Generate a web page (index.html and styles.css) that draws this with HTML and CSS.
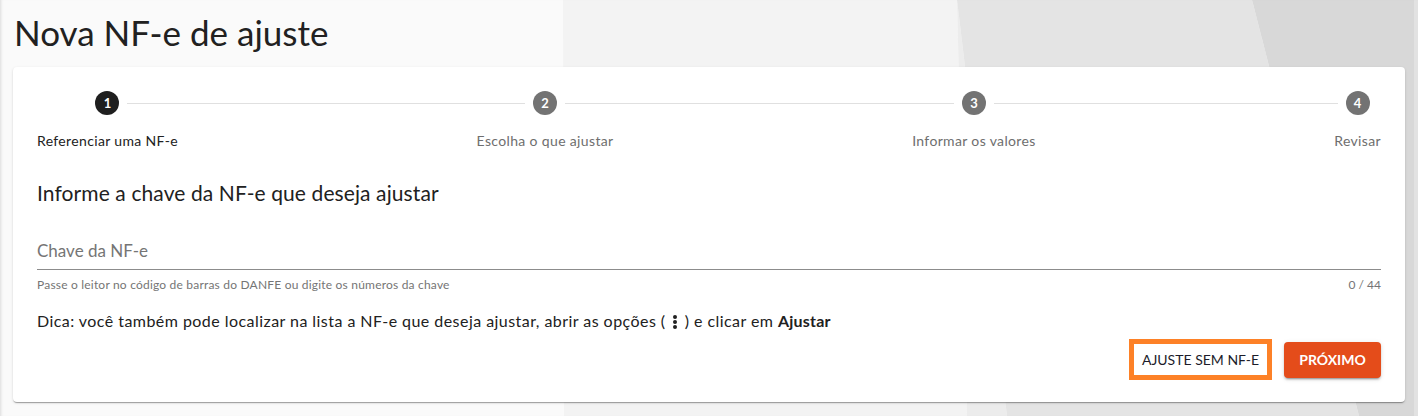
FILE: index.html
```html
<!DOCTYPE html>
<html lang="pt-BR">
<head>
<meta charset="utf-8">
<title>Nova NF-e de ajuste</title>
<link rel="stylesheet" href="styles.css">
</head>
<body>
<svg class="backdrop" width="1418" height="416" viewBox="0 0 1418 416" aria-hidden="true">
  <rect x="0" y="0" width="1418" height="416" fill="#fafafa"/>
  <polygon points="563,0 957,0 967,416 564,416" fill="#f3f3f3"/>
  <polygon points="957,0 967,416 1007,416" fill="#ececec"/>
  <polygon points="957,0 1252,0 1359,416 1007,416" fill="#e4e4e4"/>
  <polygon points="1252,0 1418,0 1418,416 1359,416" fill="#d8d8d8"/>
  <rect x="1414" y="0" width="4" height="416" fill="#e2e2e2"/>
</svg>
<main class="page">
  <h1 class="page-title">Nova NF-e de ajuste</h1>
  <section class="card">
    <div class="stepper">
      <div class="step step-first">
        <div class="step-top">
          <span class="seg seg-empty"></span>
          <span class="circle circle-active">1</span>
          <span class="seg"></span>
        </div>
        <span class="step-label step-label-active">Referenciar uma NF-e</span>
      </div>
      <span class="connector"></span>
      <div class="step">
        <div class="step-top">
          <span class="seg"></span>
          <span class="circle">2</span>
          <span class="seg"></span>
        </div>
        <span class="step-label">Escolha o que ajustar</span>
      </div>
      <span class="connector"></span>
      <div class="step">
        <div class="step-top">
          <span class="seg"></span>
          <span class="circle">3</span>
          <span class="seg"></span>
        </div>
        <span class="step-label">Informar os valores</span>
      </div>
      <span class="connector"></span>
      <div class="step">
        <div class="step-top">
          <span class="seg"></span>
          <span class="circle">4</span>
          <span class="seg seg-empty"></span>
        </div>
        <span class="step-label">Revisar</span>
      </div>
    </div>

    <h2 class="section-title">Informe a chave da NF-e que deseja ajustar</h2>

    <div class="field">
      <div class="field-input">Chave da NF-e</div>
      <div class="field-sub">
        <span class="hint">Passe o leitor no código de barras do DANFE ou digite os números da chave</span>
        <span>0 / 44</span>
      </div>
    </div>

    <p class="tip">Dica: você também pode localizar na lista a NF-e que deseja ajustar, abrir as opções (
      <svg class="kebab" width="4" height="14" viewBox="0 0 4 14" aria-hidden="true"><circle cx="2" cy="2" r="2"/><circle cx="2" cy="7" r="2"/><circle cx="2" cy="12" r="2"/></svg>
      ) e clicar em <strong>Ajustar</strong></p>

    <div class="actions">
      <button class="btn btn-outline">AJUSTE SEM NF-E</button>
      <button class="btn btn-primary">PRÓXIMO</button>
    </div>
  </section>
</main>
</body>
</html>
```

FILE: styles.css
```css
html, body {
  margin: 0;
  padding: 0;
}
body {
  font-family: Lato, "Noto Sans", sans-serif;
  color: #212121;
  width: 1418px;
  height: 416px;
  overflow: hidden;
  position: relative;
}
.backdrop {
  position: absolute;
  left: 0;
  top: 0;
  z-index: 0;
}
.page {
  position: relative;
  z-index: 1;
  padding: 0 13px;
  box-shadow: inset 3px 0 3px -2px rgba(0,0,0,0.12);
  height: 416px;
  box-sizing: border-box;
}
.page-title {
  margin: 0;
  padding-top: 12px;
  padding-left: 1px;
  height: 67px;
  box-sizing: border-box;
  font-size: 35px;
  line-height: 40px;
  font-weight: 400;
  color: #212121;
}
.card {
  background: #fff;
  border-radius: 4px;
  box-shadow: 0 2px 1px -1px rgba(0,0,0,.2), 0 1px 1px 0 rgba(0,0,0,.14), 0 1px 3px 0 rgba(0,0,0,.12);
  padding: 24px 24px 22px;
}
.stepper {
  display: flex;
  align-items: flex-start;
}
.step {
  display: flex;
  flex-direction: column;
  align-items: center;
}
.step-top {
  display: flex;
  align-items: center;
  align-self: stretch;
  height: 24px;
}
.seg {
  flex: 1;
  height: 1px;
  background: #e0e0e0;
}
.seg-empty {
  background: transparent;
}
.circle {
  width: 24px;
  height: 24px;
  border-radius: 50%;
  background: #737373;
  color: #fff;
  font-size: 13px;
  font-weight: 700;
  display: flex;
  align-items: center;
  justify-content: center;
  margin: 0 8px;
  flex: none;
}
.circle-active {
  background: #1f1f1f;
}
.connector {
  flex: 1;
  height: 1px;
  background: #e0e0e0;
  margin-top: 12px;
}
.step-label {
  margin-top: 16px;
  font-size: 14px;
  letter-spacing: 0.35px;
  line-height: 20px;
  color: #6e6e6e;
  white-space: nowrap;
}
.step-label-active {
  color: #212121;
}
.section-title {
  margin: 28px 0 0;
  font-size: 21px;
  letter-spacing: 0.1px;
  line-height: 28px;
  font-weight: 400;
  color: #212121;
}
.field {
  margin-top: 32px;
}
.field-input {
  font-size: 17px;
  line-height: 24px;
  color: #757575;
  padding-bottom: 6px;
  border-bottom: 1px solid #8c8c8c;
}
.field-sub {
  display: flex;
  justify-content: space-between;
  margin-top: 8px;
  font-size: 12px;
  line-height: 14px;
  color: #757575;
}
.hint {
  letter-spacing: 0.2px;
}
.tip {
  margin: 18px 0 0;
  font-size: 16px;
  letter-spacing: 0.45px;
  line-height: 22px;
  color: #212121;
}
.tip strong {
  font-weight: 700;
  letter-spacing: 0.2px;
}
.kebab {
  fill: #212121;
  vertical-align: -2px;
  margin: 0 3px;
}
.actions {
  display: flex;
  justify-content: flex-end;
  align-items: center;
  gap: 12px;
  margin-top: 7px;
}
.btn {
  font-family: Lato, "Noto Sans", sans-serif;
  font-size: 14px;
  cursor: pointer;
  box-sizing: border-box;
}
.btn-outline {
  height: 41px;
  width: 143px;
  border: 5px solid #fd8127;
  background: #fff;
  color: #1c1c2a;
  letter-spacing: 0;
  font-weight: 400;
  padding: 0;
}
.btn-primary {
  height: 36px;
  width: 97px;
  border: none;
  border-radius: 4px;
  background: #e44c1a;
  color: #fff;
  font-weight: 700;
  box-shadow: 0 3px 1px -2px rgba(0,0,0,.2), 0 2px 2px 0 rgba(0,0,0,.14), 0 1px 5px 0 rgba(0,0,0,.12);
}
```
